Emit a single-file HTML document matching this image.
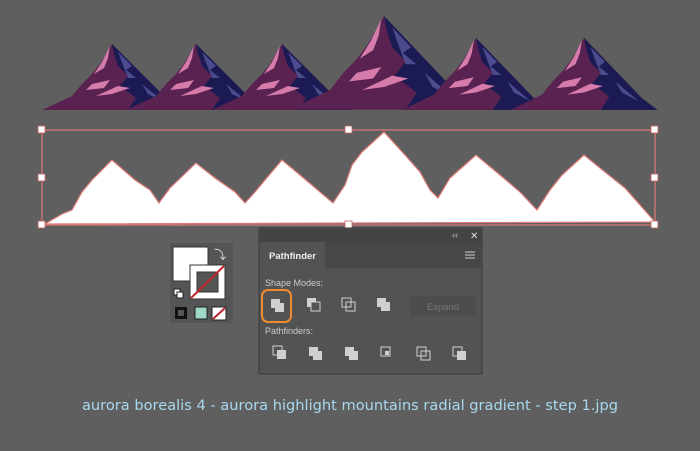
<!DOCTYPE html>
<html><head><style>
body{margin:0;width:700px;height:451px;background:#5f5f5f;overflow:hidden;position:relative;font-family:"Liberation Sans",sans-serif}
.cap{position:absolute;left:0;width:700px;top:397px;text-align:center;color:#a8d8ee;font-size:14.6px;font-family:"DejaVu Sans","Liberation Sans",sans-serif}
</style></head><body>
<svg width="700" height="451" style="position:absolute;left:0;top:0">
<defs>
<g id="m">
<path d="M-70,66 L-40,52 L-30,40 L-20,30 L-12,20 L0,0 L30,30 L55,55 L70,66 Z" fill="#5a2251"/>
<path d="M0,0 L30,30 L55,55 L70,66 L16,66 L24,54 L8,42 L16,32 L6,22 L2,10 Z" fill="#1c1a52"/>
<path d="M6,8 L20,22 L14,26 L24,34 L16,34 Z" fill="#4b4b8e"/>
<path d="M30,40 L52,58 L36,50 Z" fill="#4b4b8e"/>
<path d="M-2,2 L-10,18 L-18,30 L-8,24 L-4,14 Z" fill="#d57cab"/>
<path d="M-20,40 L-2,36 L-8,44 L-26,46 Z" fill="#d57cab"/>
<path d="M-16,52 L6,42 L18,44 L0,50 Z" fill="#d57cab"/>
</g>
</defs>
<use href="#m" transform="translate(112,44)"/>
<use href="#m" transform="translate(196,44)"/>
<use href="#m" transform="translate(282,44)"/>
<use href="#m" transform="translate(384,16) scale(1.35,1.42)"/>
<use href="#m" transform="translate(476,38) scale(1.05,1.09)"/>
<use href="#m" transform="translate(584,38) scale(1.05,1.09)"/>
<rect x="42" y="110" width="614" height="2" fill="#5f5f5f"/>
<path d="M45,224 L62,214 L72,210 L82,192 L92,180 L112,160 L135,180 L150,190 L159,203 L170,188 L196,163 L215,178 L235,192 L245,203 L255,192 L265,180 L282,160 L300,175 L320,192 L333,203 L345,185 L352,165 L362,152 L384,132 L405,155 L420,172 L430,190 L438,198 L450,178 L476,155 L500,175 L520,192 L537,210 L550,190 L562,175 L584,155 L605,172 L625,188 L640,205 L655,222 Z" fill="#fff" stroke="#e07a78" stroke-width="1.2"/>
<rect x="42" y="130" width="613" height="95" fill="none" stroke="#e07a78" stroke-width="1.2"/>
<g fill="#fff" stroke="#c06060" stroke-width="0.8">
<rect x="38" y="126" width="7" height="7"/><rect x="345" y="126" width="7" height="7"/><rect x="651" y="126" width="7" height="7"/>
<rect x="38" y="174" width="7" height="7"/><rect x="651" y="174" width="7" height="7"/>
<rect x="38" y="221" width="7" height="7"/><rect x="345" y="221" width="7" height="7"/><rect x="651" y="221" width="7" height="7"/>
</g>
<rect x="170" y="243" width="63" height="80" fill="#555"/>
<rect x="173" y="247" width="35" height="34" fill="#fff" stroke="#333"/>
<rect x="190" y="265" width="35" height="34" fill="#fff" stroke="#333"/>
<rect x="197" y="272" width="21" height="20" fill="#555" stroke="#333"/>
<line x1="191" y1="298" x2="224" y2="266" stroke="#c0242c" stroke-width="2"/>
<text x="214" y="259" fill="#ddd" font-size="12">⤵</text>
<rect x="174" y="289" width="6" height="6" fill="#fff" stroke="#222"/><rect x="177" y="292" width="6" height="6" fill="#fff" stroke="#222"/>
<rect x="175" y="307" width="12" height="12" fill="#111"/><rect x="178" y="310" width="6" height="6" fill="#555"/>
<rect x="195" y="307" width="12" height="12" fill="#9fd8c8" stroke="#222"/>
<rect x="212" y="307" width="14" height="13" fill="#fff" stroke="#222"/><line x1="213" y1="319" x2="225" y2="308" stroke="#c0242c" stroke-width="2"/>
<rect x="259" y="228" width="223" height="146" fill="#535353" stroke="#3a3a3a"/>
<rect x="259" y="228" width="223" height="14" fill="#444"/>
<text x="452" y="238" fill="#ccc" font-size="9">‹‹</text>
<text x="470" y="239" fill="#ddd" font-size="10">✕</text>
<rect x="325" y="242" width="157" height="26" fill="#474747"/>
<text x="269" y="259" fill="#eee" font-size="9.5" font-weight="bold">Pathfinder</text>
<g stroke="#ccc" stroke-width="1"><line x1="465" y1="252" x2="475" y2="252"/><line x1="465" y1="255" x2="475" y2="255"/><line x1="465" y1="258" x2="475" y2="258"/></g>
<text x="265" y="286" fill="#ccc" font-size="9">Shape Modes:</text>
<text x="265" y="334" fill="#ccc" font-size="9">Pathfinders:</text>
<rect x="262" y="290" width="29" height="32" rx="6" fill="none" stroke="#f08a30" stroke-width="2"/>
<g fill="#d0d0d0">
<rect x="271" y="299" width="9" height="9"/><rect x="275" y="303" width="9" height="9"/>
<rect x="307" y="298" width="9" height="9"/><rect x="311" y="302" width="9" height="9" fill="#535353" stroke="#d0d0d0"/>
<rect x="342" y="298" width="9" height="9" fill="none" stroke="#d0d0d0"/><rect x="346" y="302" width="9" height="9" fill="none" stroke="#d0d0d0"/>
<rect x="377" y="298" width="9" height="9"/><rect x="381" y="302" width="9" height="9"/>
<rect x="273" y="346" width="9" height="9" fill="none" stroke="#d0d0d0"/><rect x="277" y="350" width="9" height="9"/>
<rect x="309" y="347" width="9" height="9"/><rect x="313" y="351" width="9" height="9"/>
<rect x="345" y="347" width="9" height="9"/><rect x="349" y="351" width="9" height="9"/>
<rect x="381" y="347" width="9" height="9" fill="none" stroke="#d0d0d0"/><rect x="385" y="351" width="4" height="4"/>
<rect x="417" y="347" width="9" height="9" fill="none" stroke="#d0d0d0"/><rect x="421" y="351" width="9" height="9" fill="none" stroke="#d0d0d0"/>
<rect x="453" y="347" width="9" height="9" fill="none" stroke="#d0d0d0"/><rect x="457" y="351" width="9" height="9"/>
</g>
<rect x="410" y="296" width="66" height="20" fill="#4d4d4d"/>
<text x="443" y="310" fill="#777" font-size="9.5" text-anchor="middle">Expand</text>
</svg>
<div class="cap">aurora borealis 4 - aurora highlight mountains radial gradient - step 1.jpg</div>
</body></html>
